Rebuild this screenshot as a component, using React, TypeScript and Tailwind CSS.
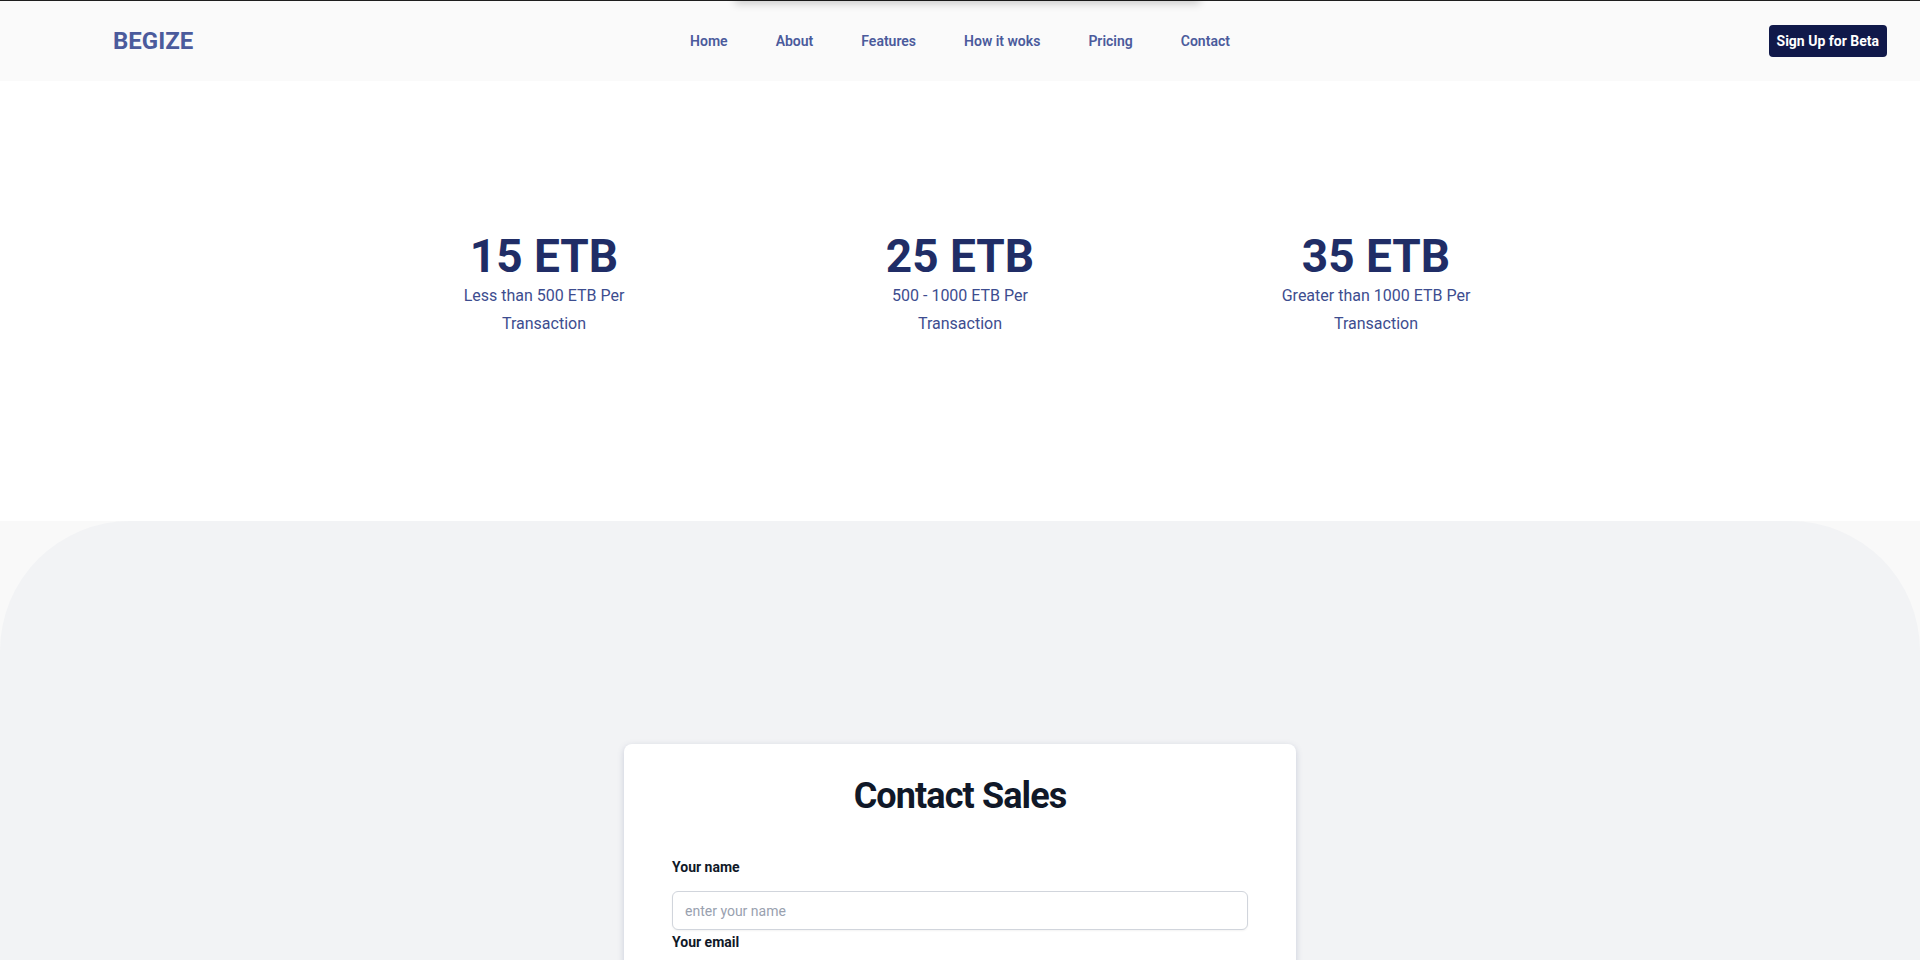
const navLinks = ["Home", "About", "Features", "How it woks", "Pricing", "Contact"];

const plans = [
  { price: "15 ETB", note: "Less than 500 ETB Per Transaction" },
  { price: "25 ETB", note: "500 - 1000 ETB Per Transaction" },
  { price: "35 ETB", note: "Greater than 1000 ETB Per Transaction" },
];

function Header() {
  return (
    <header className="grid h-[80px] grid-cols-[1fr_auto_1fr] items-center bg-[#fafafa] px-[33px]">
      <a href="#" className="ml-[80px] text-2xl font-bold text-[#4b5b9c]">
        BEGIZE
      </a>
      <nav className="flex items-center gap-12">
        {navLinks.map((link) => (
          <a key={link} href="#" className="text-sm font-semibold text-[#4b5b9c]">
            {link}
          </a>
        ))}
      </nav>
      <div className="flex justify-end">
        <button className="h-8 rounded-sm bg-[#10194a] px-2 text-sm font-bold text-white">Sign Up for Beta</button>
      </div>
    </header>
  );
}

function Pricing() {
  return (
    <section id="pricing" className="bg-white pt-[151px] pb-[183px]">
      <div className="mx-auto grid w-[1248px] grid-cols-3">
        {plans.map((plan) => (
          <div key={plan.price} className="flex flex-col items-center text-center">
            <h3 className="text-[46px] leading-[48px] font-bold text-[#202d66]">{plan.price}</h3>
            <p className="mt-0.5 w-[200px] text-base leading-7 text-[#3d4d8f]">{plan.note}</p>
          </div>
        ))}
      </div>
    </section>
  );
}

function Field({ label, type = "text", placeholder }: { label: string; type?: string; placeholder: string }) {
  return (
    <div>
      <label className="mb-3.5 block text-sm font-bold text-gray-900">{label}</label>
      <input
        type={type}
        placeholder={placeholder}
        className="block h-[39px] w-full rounded-md border border-gray-300 bg-white px-3 text-sm text-gray-900 shadow-xs placeholder:text-gray-400"
      />
    </div>
  );
}

function ContactSales() {
  return (
    <div className="bg-[#f9f9f9]">
      <section id="contact" className="rounded-t-[130px] bg-[#f2f3f5] pt-[223px] pb-24">
        <div className="mx-auto w-[672px] rounded-lg bg-white px-12 pt-8 pb-12 shadow-[0_2px_6px_rgba(80,90,140,0.25)]">
          <h2 className="mb-[41px] text-center text-4xl font-bold tracking-tight text-gray-900">Contact Sales</h2>
          <form className="space-y-0.5">
            <Field label="Your name" placeholder="enter your name" />
            <Field label="Your email" type="email" placeholder="name@example.com" />
            <div>
              <label className="mb-3.5 block text-sm font-bold text-gray-900">Your message</label>
              <textarea
                rows={5}
                placeholder="Leave a comment..."
                className="block w-full rounded-md border border-gray-300 px-3 py-2 text-sm placeholder:text-gray-400"
              />
            </div>
            <button type="button" className="mt-6 rounded-md bg-[#10194a] px-5 py-3 text-sm font-bold text-white">
              Send message
            </button>
          </form>
        </div>
      </section>
    </div>
  );
}

export default function App() {
  return (
    <div className="relative min-h-screen overflow-hidden bg-white font-['Roboto','Liberation_Sans',sans-serif]">
      <div className="h-px bg-[#1e1e1e]" />
      <div className="absolute top-[-40px] left-[735px] h-[40px] w-[465px] bg-white shadow-[0_4px_8px_rgba(0,0,0,0.18)]" />
      <Header />
      <Pricing />
      <ContactSales />
    </div>
  );
}
